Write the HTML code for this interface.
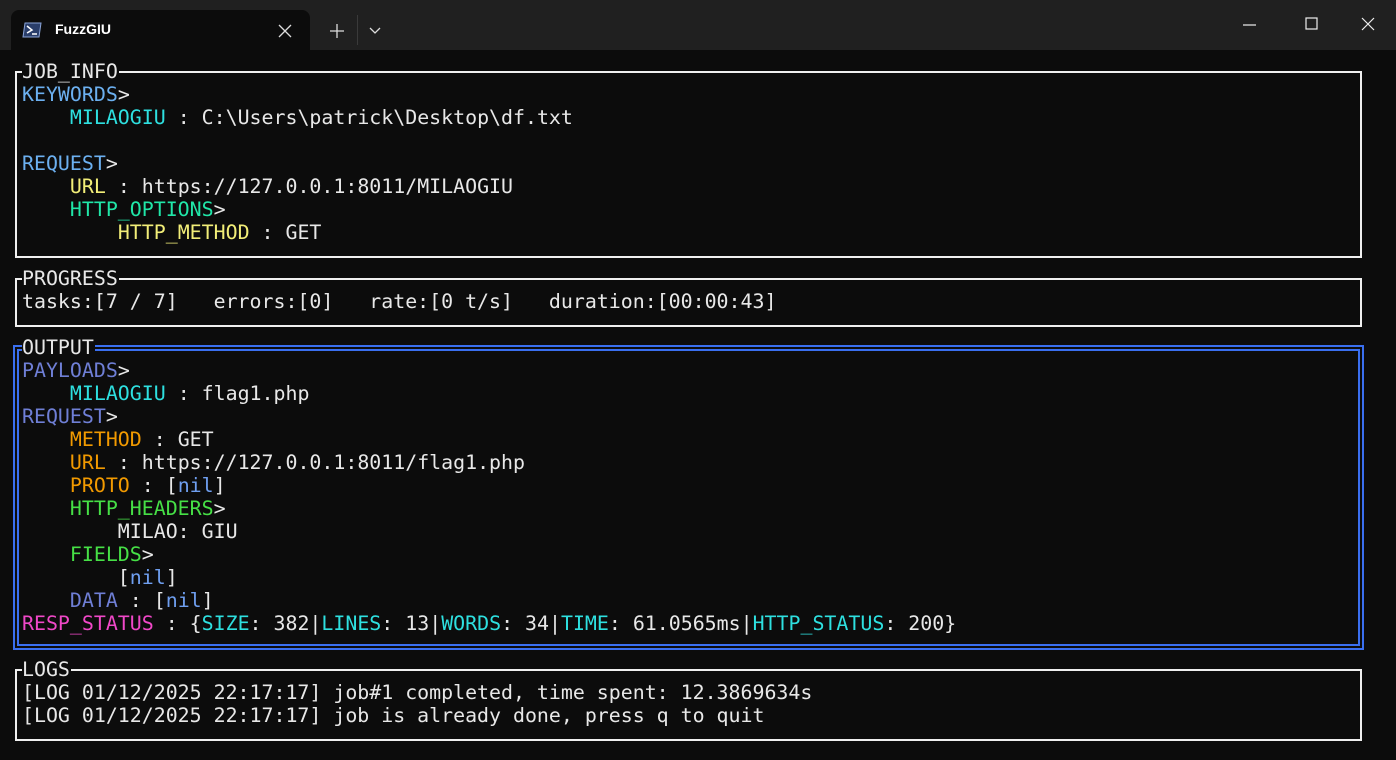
<!DOCTYPE html>
<html><head><meta charset="utf-8"><style>
body{margin:0;width:1396px;height:760px;background:#0c0c0c;overflow:hidden;position:relative;font-family:"DejaVu Sans Mono","Liberation Mono",monospace;}
.tb{position:absolute;left:0;top:0;width:1396px;height:50px;background:#202020;}
.tab{position:absolute;left:11px;top:10px;width:299px;height:40px;background:#0c0c0c;border-radius:8px 8px 0 0;}
.ttl{position:absolute;left:55px;top:21px;color:#fff;font:600 14px "Liberation Sans",sans-serif;}
.r{position:absolute;left:22px;white-space:pre;font-size:19.9px;line-height:23px;height:23px;color:#e8e8e8;}
.b{position:absolute;border:2px solid #f0f0f0;}
.lbl{background:#0c0c0c;padding-right:1px}
.kb{color:#6cb0f0}.cy{color:#2ee0e0}.ye{color:#f2ee78}.tg{color:#20e6a8}
.pb{color:#6f7fd6}.or{color:#f29a00}.gr{color:#46e046}.nl{color:#6f9ff0}.mg{color:#f048c8}
</style></head><body>
<div class="tb"></div>
<div class="tab"></div>
<svg style="position:absolute;left:22px;top:22px" width="20" height="16"><polygon points="3,1 19,1 17,15 1,15" fill="#2a3e6a" stroke="#8aa4d8" stroke-width="1"/><path d="M5 4 L10 8 L5 11 M10 12 H15" stroke="#fff" stroke-width="1.5" fill="none"/></svg>
<div class="ttl">FuzzGIU</div>
<svg style="position:absolute;left:278px;top:24px" width="14" height="14"><path d="M1 1L13 13M13 1L1 13" stroke="#ddd" stroke-width="1.3"/></svg>
<svg style="position:absolute;left:329px;top:23px" width="16" height="16"><path d="M8 1V15M1 8H15" stroke="#ddd" stroke-width="1.3"/></svg>
<div style="position:absolute;left:357px;top:15px;width:1px;height:30px;background:#3a3a3a"></div>
<svg style="position:absolute;left:369px;top:27px" width="12" height="8"><path d="M1 1L6 6L11 1" stroke="#ddd" stroke-width="1.3" fill="none"/></svg>
<svg style="position:absolute;left:1243px;top:24px" width="14" height="2"><path d="M0 1H13" stroke="#eee" stroke-width="1.2"/></svg>
<svg style="position:absolute;left:1305px;top:17px" width="14" height="14"><rect x="1" y="1" width="11" height="11" stroke="#eee" stroke-width="1.2" fill="none"/></svg>
<svg style="position:absolute;left:1361px;top:17px" width="14" height="14"><path d="M1 1L13 13M13 1L1 13" stroke="#eee" stroke-width="1.2"/></svg>

<div class="b" style="left:15px;top:71px;width:1343px;height:183px"></div>
<div class="b" style="left:15px;top:278px;width:1343px;height:45px"></div>
<div class="b" style="left:13px;top:345px;width:1347px;height:301px;border-color:#3a6ff0"></div>
<div class="b" style="left:17px;top:349px;width:1339px;height:293px;border-color:#3a6ff0"></div>
<div class="b" style="left:15px;top:669px;width:1343px;height:68px"></div>

<div class="r" style="top:60px"><span class="lbl">JOB_INFO</span></div>
<div class="r" style="top:83px"><span class="kb">KEYWORDS</span>&gt;</div>
<div class="r" style="top:106px">    <span class="cy">MILAOGIU</span> : C:\Users\patrick\Desktop\df.txt</div>
<div class="r" style="top:152px"><span class="kb">REQUEST</span>&gt;</div>
<div class="r" style="top:175px">    <span class="ye">URL</span> : https://127.0.0.1:8011/MILAOGIU</div>
<div class="r" style="top:198px">    <span class="tg">HTTP_OPTIONS</span>&gt;</div>
<div class="r" style="top:221px">        <span class="ye">HTTP_METHOD</span> : GET</div>
<div class="r" style="top:267px"><span class="lbl">PROGRESS</span></div>
<div class="r" style="top:290px">tasks:[7 / 7]   errors:[0]   rate:[0 t/s]   duration:[00:00:43]</div>
<div class="r" style="top:336px"><span class="lbl">OUTPUT</span></div>
<div class="r" style="top:359px"><span class="pb">PAYLOADS</span>&gt;</div>
<div class="r" style="top:382px">    <span class="cy">MILAOGIU</span> : flag1.php</div>
<div class="r" style="top:405px"><span class="pb">REQUEST</span>&gt;</div>
<div class="r" style="top:428px">    <span class="or">METHOD</span> : GET</div>
<div class="r" style="top:451px">    <span class="or">URL</span> : https://127.0.0.1:8011/flag1.php</div>
<div class="r" style="top:474px">    <span class="or">PROTO</span> : [<span class="nl">nil</span>]</div>
<div class="r" style="top:497px">    <span class="gr">HTTP_HEADERS</span>&gt;</div>
<div class="r" style="top:520px">        MILAO: GIU</div>
<div class="r" style="top:543px">    <span class="gr">FIELDS</span>&gt;</div>
<div class="r" style="top:566px">        [<span class="nl">nil</span>]</div>
<div class="r" style="top:589px">    <span class="pb">DATA</span> : [<span class="nl">nil</span>]</div>
<div class="r" style="top:612px"><span class="mg">RESP_STATUS</span> : {<span class="cy">SIZE</span>: 382|<span class="cy">LINES</span>: 13|<span class="cy">WORDS</span>: 34|<span class="cy">TIME</span>: 61.0565ms|<span class="cy">HTTP_STATUS</span>: 200}</div>
<div class="r" style="top:658px"><span class="lbl">LOGS</span></div>
<div class="r" style="top:681px">[LOG 01/12/2025 22:17:17] job#1 completed, time spent: 12.3869634s</div>
<div class="r" style="top:704px">[LOG 01/12/2025 22:17:17] job is already done, press q to quit</div>
</body></html>
